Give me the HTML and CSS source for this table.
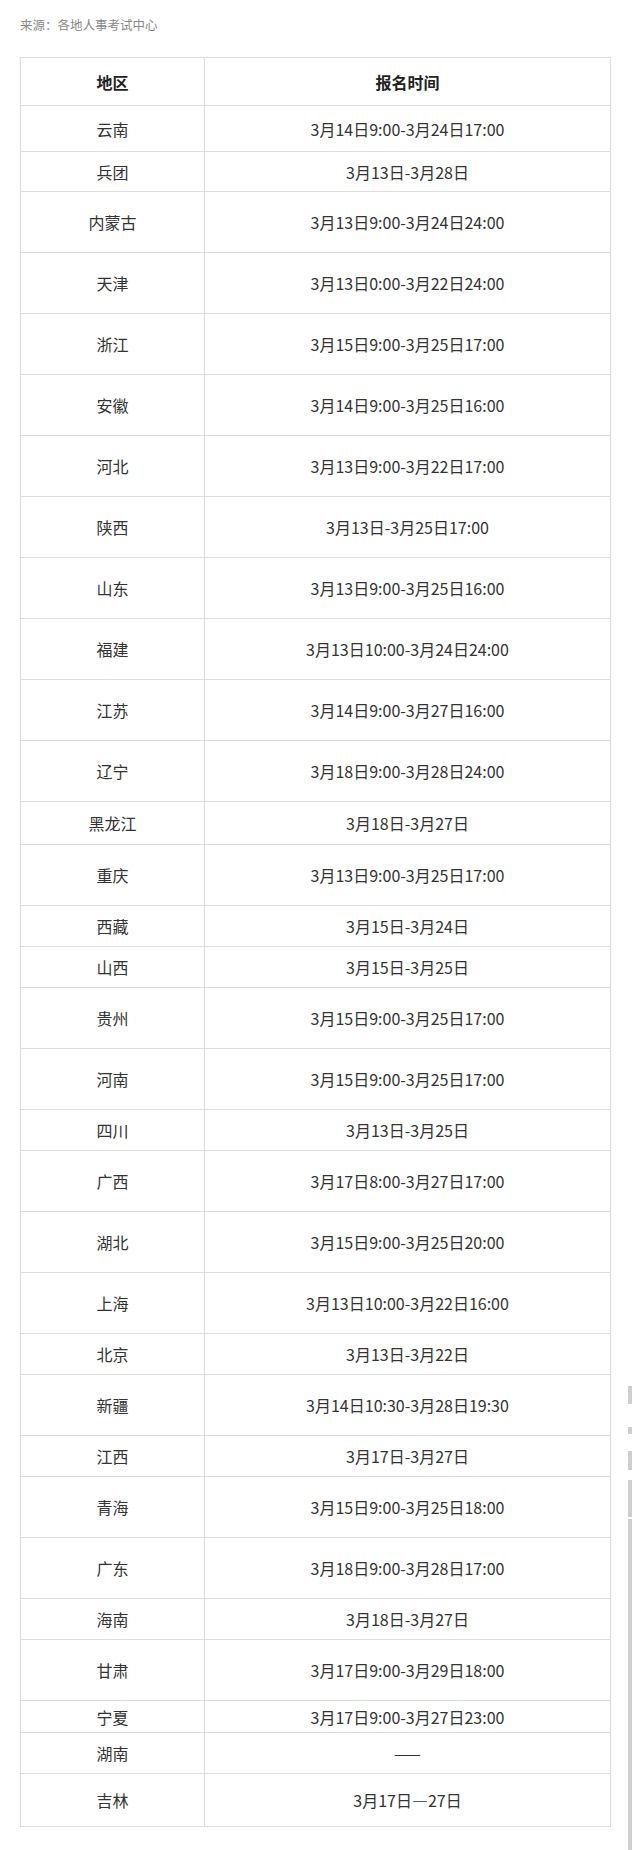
FILE: index.html
```html
<!DOCTYPE html>
<html lang="zh-CN">
<head>
<meta charset="utf-8">
<title>报名时间</title>
<link rel="stylesheet" href="styles.css">
</head>
<body>
<p class="source">来源：各地人事考试中心</p>
<table class="schedule">
  <colgroup><col class="c-region"><col class="c-time"></colgroup>
  <thead>
    <tr class="h48"><th>地区</th><th>报名时间</th></tr>
  </thead>
  <tbody>
    <tr class="h46"><td>云南</td><td>3月14日9:00-3月24日17:00</td></tr>
    <tr class="h40"><td>兵团</td><td>3月13日-3月28日</td></tr>
    <tr class="h61"><td>内蒙古</td><td>3月13日9:00-3月24日24:00</td></tr>
    <tr class="h61"><td>天津</td><td>3月13日0:00-3月22日24:00</td></tr>
    <tr class="h61"><td>浙江</td><td>3月15日9:00-3月25日17:00</td></tr>
    <tr class="h61"><td>安徽</td><td>3月14日9:00-3月25日16:00</td></tr>
    <tr class="h61"><td>河北</td><td>3月13日9:00-3月22日17:00</td></tr>
    <tr class="h61"><td>陕西</td><td>3月13日-3月25日17:00</td></tr>
    <tr class="h61"><td>山东</td><td>3月13日9:00-3月25日16:00</td></tr>
    <tr class="h61"><td>福建</td><td>3月13日10:00-3月24日24:00</td></tr>
    <tr class="h61"><td>江苏</td><td>3月14日9:00-3月27日16:00</td></tr>
    <tr class="h61"><td>辽宁</td><td>3月18日9:00-3月28日24:00</td></tr>
    <tr class="h43"><td>黑龙江</td><td>3月18日-3月27日</td></tr>
    <tr class="h61"><td>重庆</td><td>3月13日9:00-3月25日17:00</td></tr>
    <tr class="h41"><td>西藏</td><td>3月15日-3月24日</td></tr>
    <tr class="h41"><td>山西</td><td>3月15日-3月25日</td></tr>
    <tr class="h61"><td>贵州</td><td>3月15日9:00-3月25日17:00</td></tr>
    <tr class="h61"><td>河南</td><td>3月15日9:00-3月25日17:00</td></tr>
    <tr class="h41"><td>四川</td><td>3月13日-3月25日</td></tr>
    <tr class="h61"><td>广西</td><td>3月17日8:00-3月27日17:00</td></tr>
    <tr class="h61"><td>湖北</td><td>3月15日9:00-3月25日20:00</td></tr>
    <tr class="h61"><td>上海</td><td>3月13日10:00-3月22日16:00</td></tr>
    <tr class="h41"><td>北京</td><td>3月13日-3月22日</td></tr>
    <tr class="h61"><td>新疆</td><td>3月14日10:30-3月28日19:30</td></tr>
    <tr class="h41"><td>江西</td><td>3月17日-3月27日</td></tr>
    <tr class="h61"><td>青海</td><td>3月15日9:00-3月25日18:00</td></tr>
    <tr class="h61"><td>广东</td><td>3月18日9:00-3月28日17:00</td></tr>
    <tr class="h41"><td>海南</td><td>3月18日-3月27日</td></tr>
    <tr class="h61"><td>甘肃</td><td>3月17日9:00-3月29日18:00</td></tr>
    <tr class="h32"><td>宁夏</td><td>3月17日9:00-3月27日23:00</td></tr>
    <tr class="h41"><td>湖南</td><td>——</td></tr>
    <tr class="h53"><td>吉林</td><td>3月17日—27日</td></tr>
  </tbody>
</table>
<div class="edge-bars" aria-hidden="true">
  <span class="bar b1"></span>
  <span class="bar b2"></span>
  <span class="bar b3"></span>
  <span class="bar b4"></span>
  <span class="bar b5"></span>
</div>
</body>
</html>
```

FILE: styles.css
```css
html, body {
  margin: 0;
  padding: 0;
  background: #fff;
}
body {
  position: relative;
  min-height: 1850px;
  padding: 0 20px;
  font-family: "Noto Sans CJK SC", "Noto Sans", sans-serif;
  color: #333;
}
.source {
  margin: 15px 0 0;
  font-size: 12.5px;
  line-height: 20px;
  color: #888;
}
.schedule {
  margin-top: 22px;
  width: 591px;
  border-collapse: collapse;
  border-spacing: 0;
  table-layout: fixed;
  font-size: 16px;
}
.c-region { width: 184px; }
.schedule th,
.schedule td {
  border: 1px solid #ddd;
  padding: 0;
  text-align: center;
  vertical-align: middle;
  line-height: 20px;
}
.schedule th {
  font-weight: bold;
  color: #222;
}
.h48 { height: 48px; }
.h46 { height: 46px; }
.h40 { height: 40px; }
.h61 { height: 61px; }
.h43 { height: 43px; }
.h41 { height: 41px; }
.h32 { height: 32px; }
.h53 { height: 53px; }

.edge-bars {
  position: absolute;
  right: 0;
  top: 0;
  width: 4px;
  height: 1850px;
}
.bar {
  position: absolute;
  left: 0;
  width: 4px;
  background: #cfcfcf;
}
.b1 { top: 1386px; height: 18px; }
.b2 { top: 1427px; height: 7px; }
.b3 { top: 1451px; height: 19px; }
.b4 { top: 1480px; height: 37px; }
.b5 { top: 1519px; height: 331px; }
```
